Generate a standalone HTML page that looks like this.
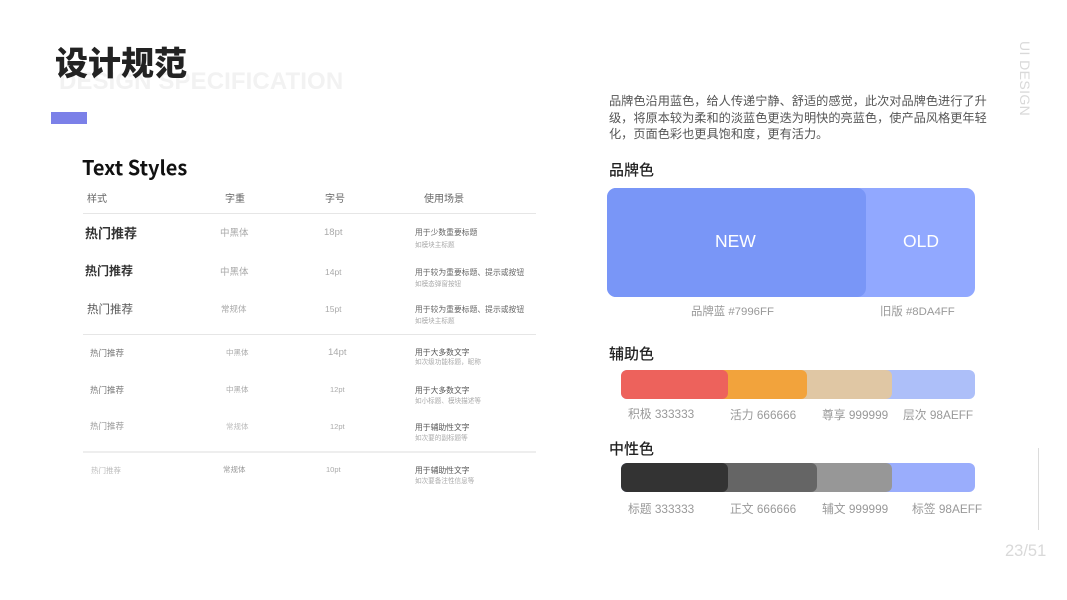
<!DOCTYPE html>
<html lang="zh">
<head>
<meta charset="utf-8">
<style>
html,body{margin:0;padding:0;background:#fff}
#p{position:relative;width:1067px;height:600px;overflow:hidden;background:#fff;font-family:"Liberation Sans","Noto Sans CJK SC",sans-serif}
#p div{position:absolute}
.t{white-space:nowrap;line-height:1}
.n{font-family:"Noto Sans CJK SC",sans-serif}
.h{font-family:"Noto Sans CJK SC",sans-serif;font-size:10px;color:#666}
.a{font-size:7.8px;color:#666;font-family:"Noto Sans CJK SC",sans-serif}
.b{font-size:6.6px;color:#aaa;font-family:"Noto Sans CJK SC",sans-serif}
.w{font-size:9.5px;color:#aaa;font-family:"Noto Sans CJK SC",sans-serif}
.c{font-size:11.8px;color:#999}
.s{font-size:15px;font-weight:500;color:#222;font-family:"Noto Sans CJK SC",sans-serif}
.l{height:1px;left:83px;width:453px;background:#e6e6e6}
.bar{height:29px;border-radius:6px}
</style>
</head>
<body>
<div id="p">
<div class="t" style="left:59px;top:70px;font-size:24px;font-weight:700;color:#f2f2f2;letter-spacing:.1px">DESIGN SPECIFICATION</div>
<div class="t n" style="left:55px;top:45px;font-size:33px;font-weight:900;color:#222">设计规范</div>
<div style="left:51px;top:112px;width:36px;height:12px;background:#7b80e8"></div>
<div class="t n" style="left:82px;top:157px;font-size:20px;font-weight:700;color:#111">Text Styles</div>

<div class="t h" style="left:87px;top:193px">样式</div>
<div class="t h" style="left:225px;top:193px">字重</div>
<div class="t h" style="left:325px;top:193px">字号</div>
<div class="t h" style="left:424px;top:193px">使用场景</div>
<div class="l" style="top:213px"></div>

<div class="t n" style="left:85px;top:226px;font-size:13px;font-weight:700;color:#333">热门推荐</div>
<div class="t w" style="left:220px;top:228px">中黑体</div>
<div class="t" style="left:324px;top:228px;font-size:9.5px;color:#aaa">18pt</div>
<div class="t a" style="left:415px;top:229px">用于少数重要标题</div>
<div class="t b" style="left:415px;top:241px">如模块主标题</div>

<div class="t n" style="left:85px;top:265px;font-size:12px;font-weight:700;color:#333">热门推荐</div>
<div class="t w" style="left:220px;top:267px">中黑体</div>
<div class="t" style="left:325px;top:268px;font-size:8.5px;color:#aaa">14pt</div>
<div class="t a" style="left:415px;top:269px">用于较为重要标题、提示或按钮</div>
<div class="t b" style="left:415px;top:280px">如模态弹窗按钮</div>

<div class="t n" style="left:87px;top:304px;font-size:11.5px;color:#555">热门推荐</div>
<div class="t" style="left:221px;top:305px;font-size:8.5px;color:#aaa;font-family:'Noto Sans CJK SC',sans-serif">常规体</div>
<div class="t" style="left:325px;top:305px;font-size:8.5px;color:#aaa">15pt</div>
<div class="t a" style="left:415px;top:306px">用于较为重要标题、提示或按钮</div>
<div class="t b" style="left:415px;top:317px">如模块主标题</div>
<div class="l" style="top:334px"></div>

<div class="t n" style="left:90px;top:349px;font-size:8.5px;color:#777">热门推荐</div>
<div class="t" style="left:226px;top:349px;font-size:7.5px;color:#aaa;font-family:'Noto Sans CJK SC',sans-serif">中黑体</div>
<div class="t" style="left:328px;top:348px;font-size:9.5px;color:#aaa">14pt</div>
<div class="t a" style="left:415px;top:349px;color:#555">用于大多数文字</div>
<div class="t b" style="left:415px;top:358px">如次级功能标题，昵称</div>

<div class="t n" style="left:90px;top:386px;font-size:8.5px;color:#777">热门推荐</div>
<div class="t" style="left:226px;top:386px;font-size:7.5px;color:#aaa;font-family:'Noto Sans CJK SC',sans-serif">中黑体</div>
<div class="t" style="left:330px;top:386px;font-size:7.5px;color:#aaa">12pt</div>
<div class="t a" style="left:415px;top:387px;color:#555">用于大多数文字</div>
<div class="t b" style="left:415px;top:397px">如小标题、模块描述等</div>

<div class="t n" style="left:90px;top:422px;font-size:8.5px;color:#999">热门推荐</div>
<div class="t" style="left:226px;top:423px;font-size:7.5px;color:#bbb;font-family:'Noto Sans CJK SC',sans-serif">常规体</div>
<div class="t" style="left:330px;top:423px;font-size:7.5px;color:#aaa">12pt</div>
<div class="t a" style="left:415px;top:424px;color:#555">用于辅助性文字</div>
<div class="t b" style="left:415px;top:434px">如次要的副标题等</div>
<div class="l" style="top:451px;height:2px;background:#eee"></div>

<div class="t n" style="left:91px;top:467px;font-size:7.5px;color:#bbb">热门推荐</div>
<div class="t" style="left:223px;top:466px;font-size:7.5px;color:#999;font-family:'Noto Sans CJK SC',sans-serif">常规体</div>
<div class="t" style="left:326px;top:466px;font-size:7.5px;color:#aaa">10pt</div>
<div class="t a" style="left:415px;top:467px;color:#555">用于辅助性文字</div>
<div class="t b" style="left:415px;top:477px">如次要备注性信息等</div>

<div class="t n" style="left:609px;top:92px;font-size:12.2px;color:#555;line-height:16.7px;white-space:normal;width:380px">品牌色沿用蓝色，给人传递宁静、舒适的感觉，此次对品牌色进行了升级，将原本较为柔和的淡蓝色更迭为明快的亮蓝色，使产品风格更年轻化，页面色彩也更具饱和度，更有活力。</div>

<div class="t s" style="left:609px;top:162px">品牌色</div>
<div style="left:607px;top:188px;width:368px;height:109px;background:#8da4ff;border-radius:9px;opacity:.96"></div>
<div style="left:607px;top:188px;width:259px;height:109px;background:#7996f7;border-radius:9px"></div>
<div class="t" style="left:715px;top:233px;font-size:17.5px;color:#fff">NEW</div>
<div class="t" style="left:903px;top:233px;font-size:17.5px;color:#fff">OLD</div>
<div class="t c" style="left:691px;top:307px;font-size:11.4px">品牌蓝 #7996FF</div>
<div class="t c" style="left:880px;top:307px;font-size:11.4px">旧版 #8DA4FF</div>

<div class="t s" style="left:609px;top:346px">辅助色</div>
<div class="bar" style="left:621px;top:370px;width:354px;background:#adbff9"></div>
<div class="bar" style="left:780px;top:370px;width:112px;background:#e0c7a4"></div>
<div class="bar" style="left:700px;top:370px;width:107px;background:#f2a33c"></div>
<div class="bar" style="left:621px;top:370px;width:107px;background:#ed625c"></div>
<div class="t c" style="left:628px;top:409px">积极 333333</div>
<div class="t c" style="left:730px;top:410px">活力 666666</div>
<div class="t c" style="left:822px;top:410px">尊享 999999</div>
<div class="t c" style="left:903px;top:410px">层次 98AEFF</div>

<div class="t s" style="left:609px;top:441px">中性色</div>
<div class="bar" style="left:621px;top:463px;width:354px;background:#9aadfc"></div>
<div class="bar" style="left:790px;top:463px;width:102px;background:#979797"></div>
<div class="bar" style="left:710px;top:463px;width:107px;background:#656565"></div>
<div class="bar" style="left:621px;top:463px;width:107px;background:#333"></div>
<div class="t c" style="left:628px;top:504px">标题 333333</div>
<div class="t c" style="left:730px;top:504px">正文 666666</div>
<div class="t c" style="left:822px;top:504px">辅文 999999</div>
<div class="t c" style="left:912px;top:504px">标签 98AEFF</div>

<div class="t" style="left:1018px;top:41px;font-size:14px;color:#d9d9d9;writing-mode:vertical-rl;letter-spacing:.4px">UI DESIGN</div>
<div style="left:1038px;top:448px;width:1px;height:82px;background:#dcdcdc"></div>
<div class="t" style="left:1005px;top:543px;font-size:16.5px;color:#d9d9d9">23/51</div>
</div>
</body>
</html>
